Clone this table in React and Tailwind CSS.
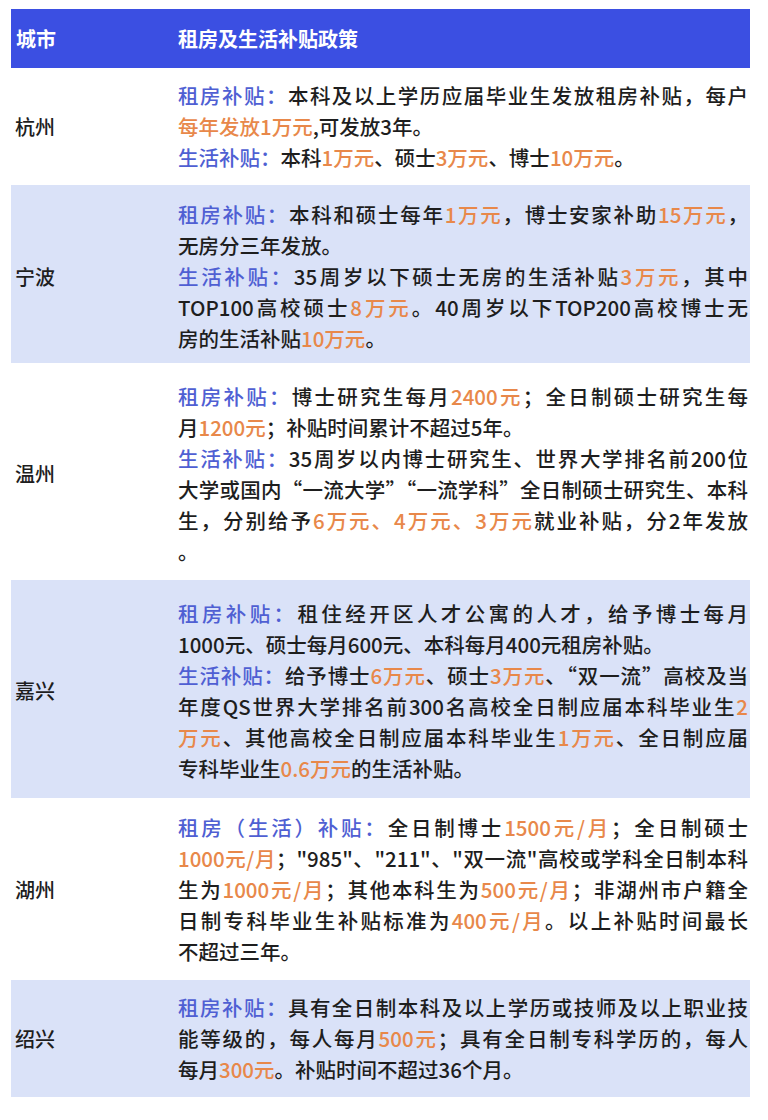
const B = ({ children }) => <span className="text-[#4f5fd3]">{children}</span>;
const O = ({ children }) => <span className="text-[#e8884a]">{children}</span>;

// 一行文字；full 为 true 时两端对齐，撑满整列
function Line({ full, children }) {
  return <div className={full ? "text-justify [text-align-last:justify]" : ""}>{children}</div>;
}

const rows = [
  {
    city: "杭州",
    pad: "pt-[12px] pb-[12px]",
    lines: [
      [true, <><B>租房补贴：</B>本科及以上学历应届毕业生发放租房补贴，每户</>],
      [false, <><O>每年发放1万元</O>,可发放3年。</>],
      [false, <><B>生活补贴：</B>本科<O>1万元</O>、硕士<O>3万元</O>、博士<O>10万元</O>。</>],
    ],
  },
  {
    city: "宁波",
    pad: "pt-[14px] pb-[9px]",
    lines: [
      [true, <><B>租房补贴：</B>本科和硕士每年<O>1万元</O>，博士安家补助<O>15万元</O>，</>],
      [false, <>无房分三年发放。</>],
      [true, <><B>生活补贴：</B>35周岁以下硕士无房的生活补贴<O>3万元</O>，其中</>],
      [true, <>TOP100高校硕士<O>8万元</O>。40周岁以下TOP200高校博士无</>],
      [false, <>房的生活补贴<O>10万元</O>。</>],
    ],
  },
  {
    city: "温州",
    pad: "pt-[18px] pb-[13px]",
    lines: [
      [true, <><B>租房补贴：</B>博士研究生每月<O>2400元</O>；全日制硕士研究生每</>],
      [false, <>月<O>1200元</O>；补贴时间累计不超过5年。</>],
      [true, <><B>生活补贴：</B>35周岁以内博士研究生、世界大学排名前200位</>],
      [true, <>大学或国内“一流大学”“一流学科”全日制硕士研究生、本科</>],
      [true, <>生，分别给予<O>6万元、4万元、3万元</O>就业补贴，分2年发放</>],
      [false, <>。</>],
    ],
  },
  {
    city: "嘉兴",
    pad: "pt-[18px] pb-[14px]",
    lines: [
      [true, <><B>租房补贴：</B>租住经开区人才公寓的人才，给予博士每月</>],
      [false, <>1000元、硕士每月600元、本科每月400元租房补贴。</>],
      [true, <><B>生活补贴：</B>给予博士<O>6万元</O>、硕士<O>3万元</O>、“双一流”高校及当</>],
      [true, <>年度QS世界大学排名前300名高校全日制应届本科毕业生<O>2</O></>],
      [true, <><O>万元</O>、其他高校全日制应届本科毕业生<O>1万元</O>、全日制应届</>],
      [false, <>专科毕业生<O>0.6万元</O>的生活补贴。</>],
    ],
  },
  {
    city: "湖州",
    pad: "pt-[14px] pb-[13px]",
    lines: [
      [true, <><B>租房（生活）补贴：</B>全日制博士<O>1500元/月</O>；全日制硕士</>],
      [true, <><O>1000元/月</O>；"985"、"211"、"双一流"高校或学科全日制本科</>],
      [true, <>生为<O>1000元/月</O>；其他本科生为<O>500元/月</O>；非湖州市户籍全</>],
      [true, <>日制专科毕业生补贴标准为<O>400元/月</O>。以上补贴时间最长</>],
      [false, <>不超过三年。</>],
    ],
  },
  {
    city: "绍兴",
    pad: "pt-[12px] pb-[12px]",
    lines: [
      [true, <><B>租房补贴：</B>具有全日制本科及以上学历或技师及以上职业技</>],
      [true, <>能等级的，每人每月<O>500元</O>；具有全日制专科学历的，每人</>],
      [false, <>每月<O>300元</O>。补贴时间不超过36个月。</>],
    ],
  },
];

export default function App() {
  return (
    <div
      className="min-h-[1120px] bg-white pt-[9px] text-[#1e1e1e]"
      style={{ fontFamily: '"Noto Sans CJK SC", "Noto Sans", sans-serif' }}
    >
      <div className="mx-[11px] w-[739px]">
        <div className="flex h-[59px] items-center bg-[#3b4fe2] text-[20px] font-bold text-white">
          <div className="w-[167px] pl-[5px]">城市</div>
          <div>租房及生活补贴政策</div>
        </div>

        {rows.map((row, i) => (
          <div
            key={row.city}
            className={`flex items-center ${i % 2 === 1 ? "bg-[#dae2f8]" : "bg-white"} ${row.pad}`}
          >
            <div className="w-[167px] shrink-0 pl-[4px] text-[20px] font-medium">{row.city}</div>
            <div className="w-[570px] text-[20.5px] font-medium leading-[31px]">
              {row.lines.map(([full, content], j) => (
                <Line key={j} full={full}>{content}</Line>
              ))}
            </div>
          </div>
        ))}
      </div>
    </div>
  );
}
